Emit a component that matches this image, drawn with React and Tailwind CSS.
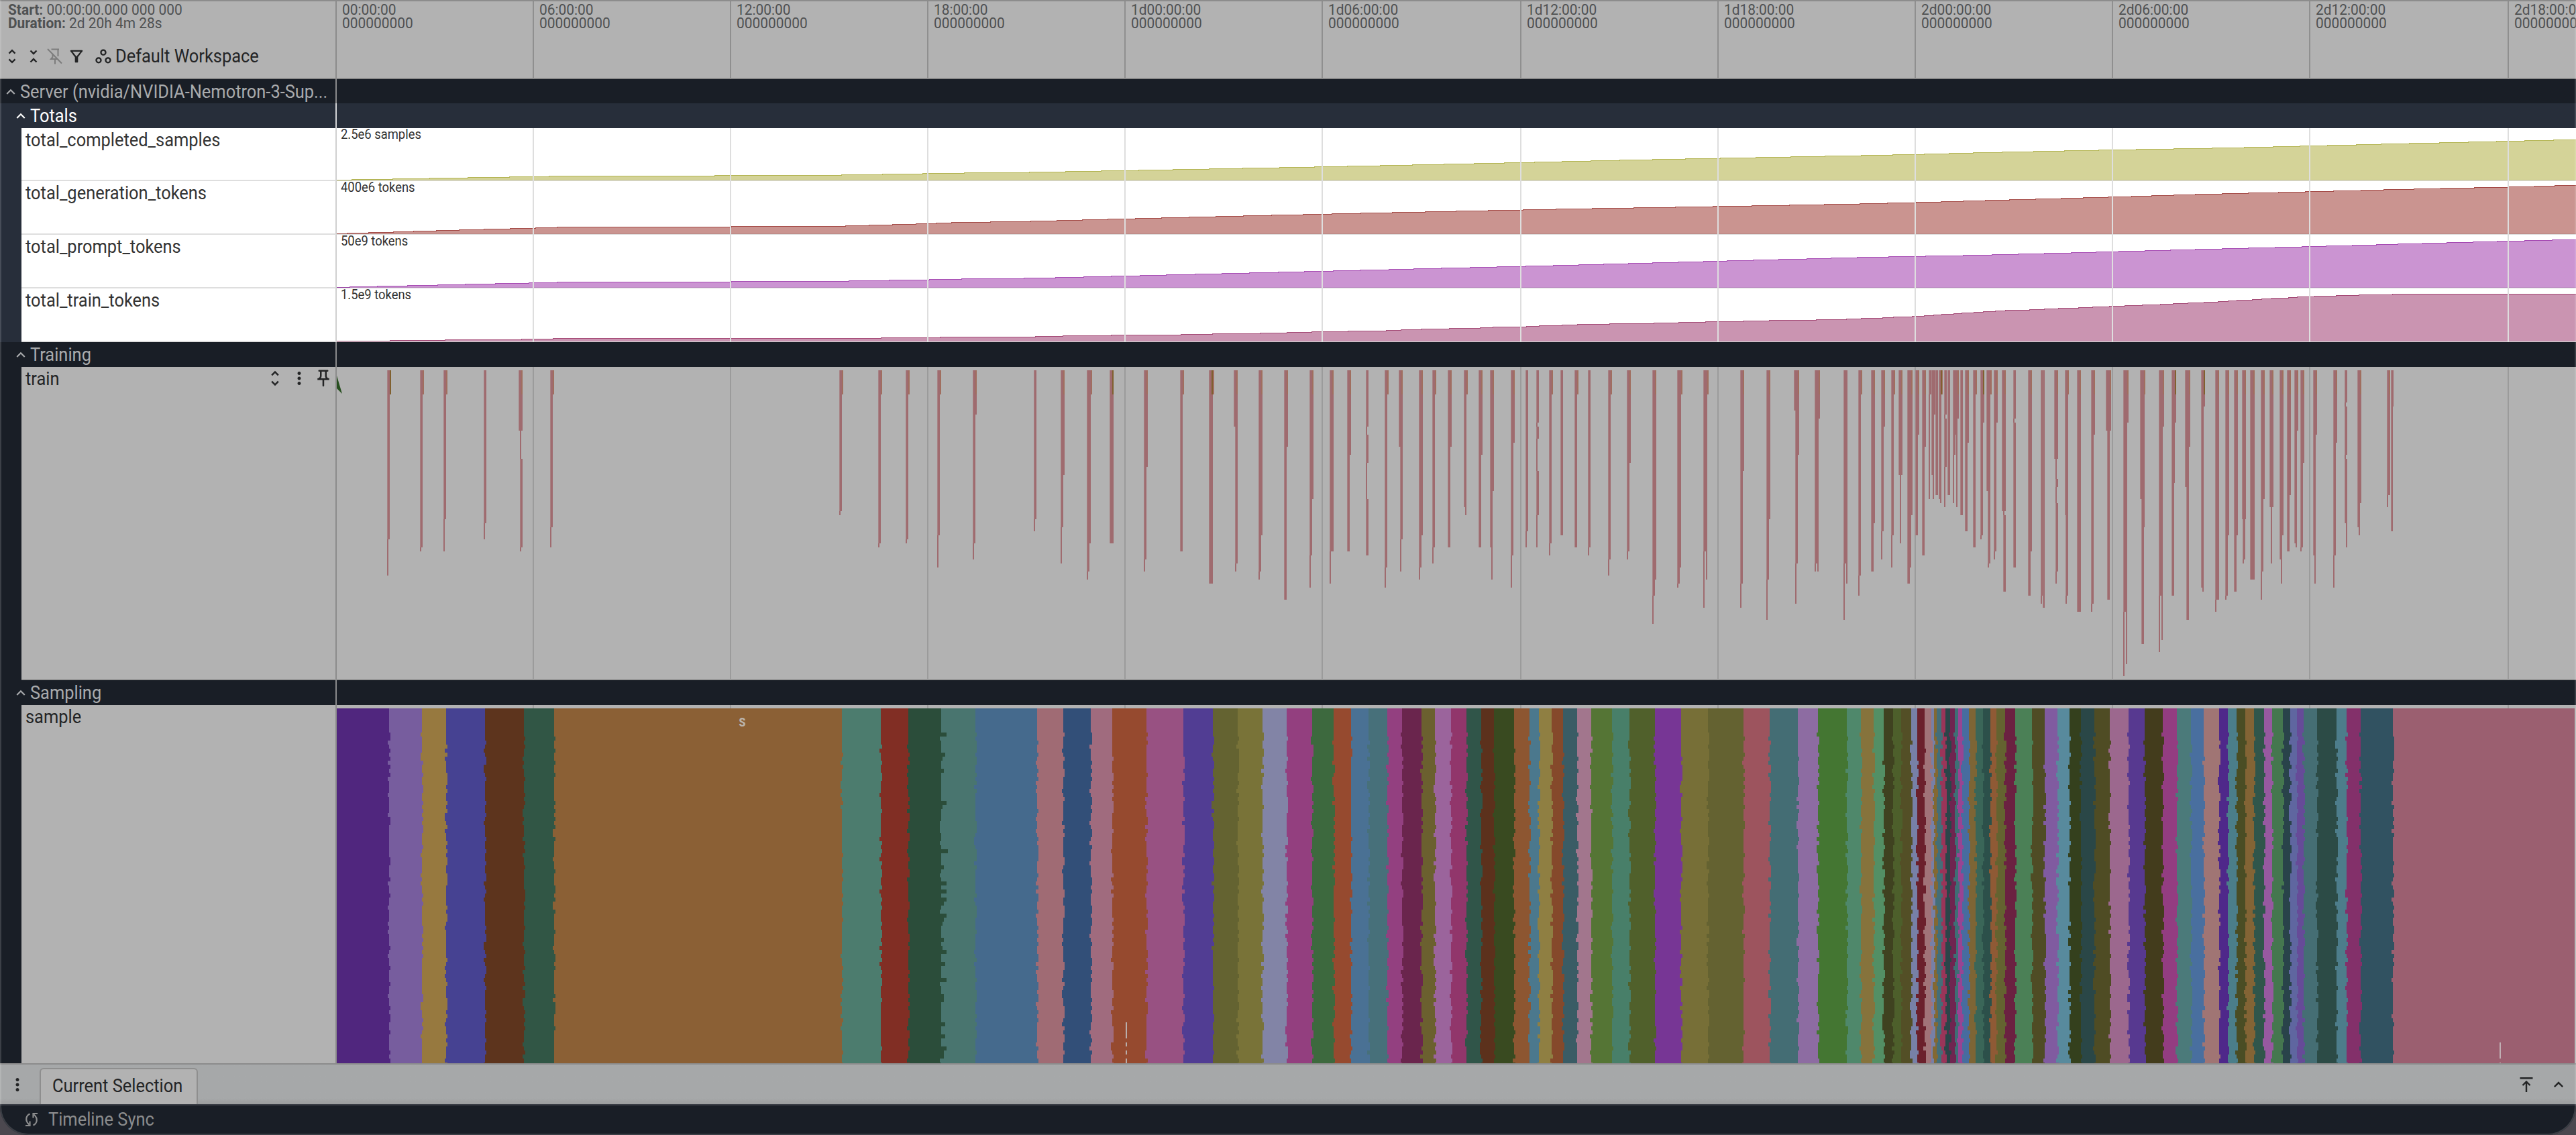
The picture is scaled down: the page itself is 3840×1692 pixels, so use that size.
import React from "react";
import {
  MdExpandLess,
  MdMoreVert,
  MdOutlineFilterAlt,
  MdOutlinePushPin,
  MdOutlineWorkspaces,
  MdUnfoldLess,
  MdUnfoldMore,
} from "react-icons/md";

// timeline starts right of the track shell, all x values are page pixels
const LEFT = 502;
const WIDTH = 3338;

const GRID = [794, 1088, 1382, 1676, 1970, 2266, 2560, 2854, 3148, 3442, 3738];

const TIMES = [
  "00:00:00",
  "06:00:00",
  "12:00:00",
  "18:00:00",
  "1d00:00:00",
  "1d06:00:00",
  "1d12:00:00",
  "1d18:00:00",
  "2d00:00:00",
  "2d06:00:00",
  "2d12:00:00",
  "2d18:00:00",
];

// every entry in steps is the x where the counter grows by one pixel
const COUNTERS = [
  {
    name: "total_completed_samples",
    max: "2.5e6 samples",
    fill: "#d4d398",
    line: "#b3b451",
    steps: [
      524, 585, 640, 697, 759, 818, 1065, 1254, 1315, 1375, 1437, 1534, 1588, 1641, 1697, 1748, 1802, 1852,
      1907, 1959, 2008, 2057, 2105, 2152, 2197, 2242, 2287, 2328, 2371, 2414, 2463, 2512, 2564, 2617, 2669,
      2720, 2774, 2821, 2868, 2905, 2941, 2984, 3031, 3077, 3128, 3184, 3240, 3297, 3345, 3388, 3428, 3469,
      3512, 3549, 3591, 3636, 3679, 3721, 3763, 3806,
    ],
  },
  {
    name: "total_generation_tokens",
    max: "400e6 tokens",
    fill: "#ca9490",
    line: "#a44a46",
    steps: [
      517, 549, 586, 616, 650, 684, 721, 760, 798, 830, 1090, 1260, 1295, 1330, 1365, 1395, 1418, 1476, 1536,
      1575, 1613, 1651, 1692, 1731, 1772, 1812, 1853, 1895, 1942, 1985, 2028, 2075, 2124, 2170, 2218, 2270,
      2319, 2373, 2435, 2497, 2553, 2611, 2667, 2719, 2772, 2813, 2856, 2893, 2926, 2959, 2995, 3034, 3072,
      3105, 3142, 3177, 3207, 3240, 3272, 3312, 3351, 3396, 3436, 3478, 3519, 3553, 3598, 3638, 3688, 3739,
      3778, 3808,
    ],
  },
  {
    name: "total_prompt_tokens",
    max: "50e9 tokens",
    fill: "#cb94d2",
    line: "#a64bb3",
    steps: [
      521, 562, 607, 652, 693, 738, 788, 830, 1090, 1265, 1325, 1385, 1433, 1526, 1573, 1615, 1656, 1699, 1738,
      1781, 1821, 1862, 1905, 1944, 1987, 2027, 2070, 2107, 2148, 2191, 2231, 2274, 2315, 2353, 2390, 2427,
      2463, 2501, 2539, 2574, 2613, 2651, 2693, 2729, 2768, 2815, 2870, 2926, 2969, 3008, 3047, 3087, 3124,
      3158, 3197, 3235, 3272, 3312, 3351, 3391, 3431, 3467, 3506, 3542, 3574, 3611, 3647, 3686, 3722, 3763,
      3804,
    ],
  },
  {
    name: "total_train_tokens",
    max: "1.5e9 tokens",
    fill: "#ca94b1",
    line: "#a44a76",
    steps: [
      581, 663, 777, 824, 1313, 1401, 1543, 1584, 1656, 1760, 1807, 1878, 1918, 1955, 2009, 2066, 2088, 2118,
      2160, 2206, 2225, 2275, 2294, 2328, 2351, 2399, 2465, 2502, 2542, 2598, 2637, 2707, 2752, 2774, 2806,
      2822, 2850, 2868, 2882, 2894, 2912, 2924, 2942, 2956, 2974, 2989, 3025, 3047, 3068, 3098, 3119, 3144,
      3167, 3193, 3220, 3239, 3261, 3285, 3306, 3321, 3334, 3357, 3371, 3386, 3411, 3424, 3450, 3482, 3516,
      3566,
    ],
  },
];

// one line per flame, segments are [x, width, bottom] and continue downwards
const FLAMES = [
  [[577, 6, 588], [577, 4, 804], [577, 2, 858]],
  [[626, 6, 588], [626, 4, 816], [626, 2, 822]],
  [[661, 6, 588], [661, 4, 774], [661, 2, 822]],
  [[721, 4, 780], [721, 2, 804]],
  [[773, 6, 642], [775, 2, 684], [775, 4, 816], [775, 2, 822]],
  [[820, 6, 588], [820, 4, 786], [820, 2, 816]],
  [[1251, 6, 588], [1251, 4, 762], [1251, 2, 768]],
  [[1309, 6, 588], [1309, 4, 810], [1309, 2, 816]],
  [[1350, 6, 588], [1350, 4, 804], [1350, 2, 810]],
  [[1397, 6, 588], [1397, 4, 798], [1397, 2, 846]],
  [[1450, 6, 618], [1450, 4, 810], [1450, 2, 834]],
  [[1541, 4, 774], [1541, 2, 792]],
  [[1581, 6, 708], [1581, 4, 786], [1581, 2, 840]],
  [[1620, 8, 588], [1620, 6, 810], [1620, 4, 852], [1620, 2, 864]],
  [[1654, 6, 810]],
  [[1705, 6, 696], [1705, 4, 834], [1705, 2, 852]],
  [[1759, 6, 588], [1759, 4, 822]],
  [[1802, 8, 588], [1802, 6, 870]],
  [[1839, 6, 636], [1841, 4, 840], [1841, 2, 852]],
  [[1876, 6, 798], [1876, 4, 852], [1876, 2, 864]],
  [[1914, 6, 666], [1914, 4, 894]],
  [[1952, 6, 744], [1952, 4, 828], [1952, 2, 876]],
  [[1982, 6, 822], [1982, 2, 870]],
  [[2008, 6, 678], [2008, 4, 822]],
  [[2036, 4, 636], [2036, 2, 648], [2036, 4, 690], [2036, 2, 744], [2036, 4, 828]],
  [[2064, 6, 588], [2064, 4, 846], [2064, 2, 876]],
  [[2085, 6, 666], [2087, 4, 804], [2087, 2, 852]],
  [[2115, 6, 798], [2115, 4, 846], [2115, 2, 864]],
  [[2135, 6, 588], [2135, 4, 816], [2135, 2, 840]],
  [[2158, 6, 666], [2158, 4, 816]],
  [[2182, 6, 588], [2182, 4, 756], [2184, 2, 768]],
  [[2204, 6, 678], [2204, 4, 816]],
  [[2221, 6, 732], [2221, 4, 816], [2223, 2, 864]],
  [[2252, 6, 660], [2252, 4, 828], [2252, 2, 876]],
  [[2274, 4, 792], [2274, 2, 816]],
  [[2290, 4, 630], [2290, 2, 636], [2290, 4, 654], [2290, 2, 702], [2290, 4, 768], [2290, 2, 816]],
  [[2309, 6, 588], [2309, 4, 810], [2309, 2, 828]],
  [[2326, 4, 798]],
  [[2347, 6, 588], [2347, 4, 816]],
  [[2367, 4, 816], [2367, 2, 828]],
  [[2397, 6, 588], [2397, 4, 834], [2397, 2, 858]],
  [[2425, 6, 690], [2425, 4, 822], [2425, 2, 834]],
  [[2463, 6, 864], [2463, 4, 888], [2463, 2, 930]],
  [[2500, 8, 588], [2500, 6, 846], [2500, 4, 870], [2500, 2, 876]],
  [[2539, 8, 588], [2539, 6, 822], [2539, 2, 906]],
  [[2543, 2, 864]],
  [[2594, 6, 702], [2594, 4, 870], [2594, 2, 906]],
  [[2633, 6, 774], [2633, 4, 864], [2633, 2, 924]],
  [[2674, 8, 612], [2676, 6, 678], [2676, 4, 840], [2676, 2, 900]],
  [[2705, 8, 624], [2705, 6, 840], [2705, 2, 852]],
  [[2709, 2, 852]],
  [[2748, 6, 840], [2748, 2, 924]],
  [[2752, 2, 870]],
  [[2770, 6, 588], [2770, 4, 858], [2770, 2, 888]],
  [[2789, 6, 780], [2789, 4, 852]],
  [[2804, 6, 636], [2804, 4, 792], [2804, 2, 834]],
  [[2819, 6, 588], [2819, 4, 798], [2819, 2, 846]],
  [[2830, 6, 708], [2832, 2, 810]],
  [[2843, 8, 768], [2843, 6, 846], [2843, 4, 870]],
  [[2855, 6, 648], [2855, 4, 798]],
  [[2865, 6, 666], [2865, 4, 828]],
  [[2875, 14, 588], [2875, 2, 744]],
  [[2879, 10, 618], [2879, 4, 708], [2881, 2, 744]],
  [[2885, 4, 738]],
  [[2890, 6, 588], [2890, 4, 744], [2892, 2, 750]],
  [[2898, 4, 618], [2898, 2, 624], [2898, 4, 696], [2898, 2, 756]],
  [[2903, 4, 738]],
  [[2911, 9, 624], [2911, 7, 648], [2911, 4, 678], [2911, 2, 750]],
  [[2916, 2, 756]],
  [[2922, 4, 768]],
  [[2929, 6, 660], [2929, 4, 792]],
  [[2941, 6, 588], [2941, 4, 816]],
  [[2952, 6, 630], [2952, 4, 798], [2952, 2, 804]],
  [[2961, 8, 588], [2961, 6, 732], [2963, 4, 840], [2963, 2, 846]],
  [[2972, 6, 630], [2972, 4, 822], [2972, 2, 834]],
  [[2984, 6, 762], [2986, 2, 768], [2986, 4, 882]],
  [[3001, 4, 624], [3001, 2, 630], [3001, 4, 846]],
  [[3023, 6, 822], [3023, 4, 888]],
  [[3042, 6, 888], [3042, 2, 900]],
  [[3045, 3, 906]],
  [[3062, 6, 684], [3064, 2, 714], [3064, 4, 726], [3064, 2, 750], [3064, 4, 852], [3064, 2, 870]],
  [[3078, 6, 588], [3078, 5, 768], [3079, 4, 888], [3079, 2, 900]],
  [[3096, 6, 912]],
  [[3117, 6, 648], [3117, 4, 900], [3117, 2, 912]],
  [[3139, 8, 642], [3141, 4, 894]],
  [[3165, 8, 630], [3165, 6, 912], [3165, 2, 1008]],
  [[3169, 2, 990]],
  [[3190, 8, 588], [3190, 7, 744], [3192, 5, 786], [3192, 4, 960]],
  [[3218, 8, 636], [3218, 6, 888], [3218, 2, 972]],
  [[3222, 2, 954]],
  [[3237, 7, 630], [3237, 5, 720], [3237, 4, 888]],
  [[3257, 8, 666], [3257, 6, 726], [3259, 4, 924]],
  [[3281, 6, 606], [3281, 4, 876], [3283, 2, 882]],
  [[3302, 6, 894], [3302, 2, 912]],
  [[3317, 6, 798], [3317, 4, 888], [3317, 2, 894]],
  [[3330, 6, 798], [3330, 4, 882]],
  [[3342, 6, 774], [3343, 4, 834], [3343, 2, 840]],
  [[3354, 7, 864]],
  [[3370, 6, 744], [3370, 4, 852], [3370, 2, 894]],
  [[3383, 6, 756], [3385, 2, 840]],
  [[3398, 6, 798], [3398, 4, 834], [3400, 2, 870]],
  [[3409, 6, 738], [3409, 4, 822]],
  [[3420, 6, 642], [3420, 4, 810], [3422, 2, 816]],
  [[3429, 6, 690], [3429, 4, 816], [3429, 2, 822]],
  [[3448, 6, 648], [3448, 4, 828], [3450, 2, 870]],
  [[3478, 6, 660], [3478, 4, 828], [3478, 2, 876]],
  [[3495, 4, 600], [3495, 2, 606], [3495, 4, 678], [3495, 2, 684], [3495, 4, 780], [3497, 2, 816]],
  [[3514, 6, 750], [3514, 4, 786], [3516, 2, 798]],
  [[3558, 5, 738], [3558, 2, 756]],
  [[3564, 4, 606], [3564, 3, 792]],
];

// flames with an olive slice in their first row
const OLIVE = [581, 1658, 1806, 2893, 2956, 3242, 3285];

// sampling slices: start x and colour
const SLICES = [
  [502, "#50267e"], [580, "#775d9e"], [629, "#97793f"], [665, "#464292"], [723, "#5d341d"], [781, "#315645"],
  [826, "#8b6035"], [1255, "#4c7c6e"], [1313, "#812e24"], [1354, "#2b4d3a"], [1403, "#49756f"], [1454, "#456a8d"],
  [1546, "#a06b74"], [1585, "#324f78"], [1626, "#a06b7e"], [1658, "#964a2f"], [1709, "#985182"], [1764, "#513d93"],
  [1808, "#646331"], [1845, "#797338"], [1882, "#8284a6"], [1918, "#933f7f"], [1956, "#3d693e"], [1988, "#964a2f"],
  [2014, "#4a7194"], [2040, "#47707a"], [2068, "#934080"], [2090, "#6a254d"], [2119, "#6b602f"], [2139, "#9b649c"],
  [2163, "#91366b"], [2186, "#305549"], [2208, "#5c311c"], [2227, "#394a20"], [2257, "#8d5631"], [2280, "#4b788d"],
  [2294, "#8f7f42"], [2313, "#85492b"], [2330, "#3a5c65"], [2351, "#a2768d"], [2372, "#557535"], [2403, "#487f69"],
  [2429, "#50602b"], [2467, "#773695"], [2506, "#776f37"], [2546, "#646231"], [2599, "#9d545e"], [2638, "#446d74"],
  [2680, "#8d6ca2"], [2710, "#447632"], [2753, "#4f886b"], [2774, "#86733c"], [2793, "#538f65"], [2808, "#3f4220"],
  [2822, "#4d5f2b"], [2834, "#534f26"], [2849, "#7780a7"], [2858, "#6b202c"], [2869, "#a17378"], [2879, "#7780a7"],
  [2883, "#836833"], [2887, "#446e78"], [2894, "#9a3559"], [2900, "#2b4549"], [2907, "#6f2550"], [2914, "#3f6e75"],
  [2919, "#984493"], [2925, "#476c9f"], [2935, "#7d6535"], [2945, "#3a6658"], [2956, "#2c504a"], [2967, "#8f5a35"],
  [2976, "#646330"], [2989, "#6b2141"], [3004, "#4b8056"], [3029, "#4f4c25"], [3048, "#805ba0"], [3067, "#588a9d"],
  [3085, "#34401d"], [3102, "#2a4747"], [3122, "#4f4c24"], [3145, "#9c688e"], [3173, "#573990"], [3197, "#433c1c"],
  [3224, "#933d81"], [3245, "#4b7a7a"], [3266, "#496f9f"], [3285, "#a07574"], [3308, "#4f288a"], [3321, "#4b7e8a"],
  [3334, "#4a4d24"], [3347, "#836435"], [3360, "#30564b"], [3375, "#9759a0"], [3387, "#45774f"], [3403, "#29434a"],
  [3414, "#5f66a0"], [3424, "#664b98"], [3434, "#456e74"], [3454, "#2c4b46"], [3483, "#4d7d8b"], [3498, "#83306a"],
  [3519, "#315261"], [3567, "#9b5f70"],
];

function noise(a, b) {
  const v = Math.sin(a * 12.9898 + b * 78.233) * 43758.5453;
  return v - Math.floor(v);
}

function slicePath(x, index) {
  let d = `M3838 1056H${x}V1092`;
  if (index === 0) return d + "V1585H3838Z";
  for (let row = 0, y = 1092; y < 1585; row++, y += 6) {
    const n = noise(index, row);
    let shift = n < 0.12 ? -2 : n > 0.7 ? 2 : 0;
    // this edge is much rougher than the others
    if (x === 1403 && n > 0.7) shift = 2 + Math.round((n - 0.7) * 12) * 2;
    d += `H${x + shift}V${Math.min(y + 6, 1585)}`;
  }
  return d + "H3838Z";
}

function counterPath(steps, height) {
  let y = height - 1.5;
  let d = `M${LEFT} ${y}`;
  steps.forEach((x) => {
    d += `H${x}V${--y}`;
  });
  return d + "H3840";
}

function GridLines({ color, top, height }) {
  return GRID.map((x) => <rect key={x} x={x} y={top} width="2" height={height} fill={color} />);
}

function Canvas({ top, height, children }) {
  return (
    <svg
      className="block shrink-0"
      width={WIDTH}
      height={height}
      viewBox={`${LEFT} ${top} ${WIDTH} ${height}`}
      shapeRendering="crispEdges"
    >
      {children}
    </svg>
  );
}

// slightly narrowed ui text
function Label({ children }) {
  return <span className="inline-block origin-left scale-x-[0.908] whitespace-nowrap">{children}</span>;
}

function TitleRow({ title, height, nested, active }) {
  return (
    <div className={`flex ${height} ${active ? "bg-[#272e3a] text-white" : "bg-[#191e26] text-[#a9abad]"}`}>
      <div
        className={`flex w-[502px] shrink-0 items-center border-r-2 pt-[1px] ${nested ? "pl-[18px]" : "pl-[3px]"} ${
          active ? "border-[#d4d5d7]" : "border-[#8a8b8c]"
        }`}
      >
        <MdExpandLess className="mr-[1px] size-[26px] shrink-0" />
        <div className="w-0">
          <Label>{title}</Label>
        </div>
      </div>
    </div>
  );
}

function CounterTrack({ counter, height }) {
  const d = counterPath(counter.steps, height);
  return (
    <div className="flex bg-[#272e3a]">
      <div
        className="ml-8 w-[470px] shrink-0 border-r-2 border-b-2 border-r-[#d0d0d0] border-b-[#dedede] bg-white pt-[2px] pl-[6px] leading-8 text-[#333]"
        style={{ height }}
      >
        <Label>{counter.name}</Label>
      </div>
      <div className="relative bg-white">
        <Canvas top={0} height={height}>
          <path d={`${d}V${height - 1}H${LEFT}Z`} fill={counter.fill} />
          <path d={d} fill="none" stroke={counter.line} />
          <rect x={LEFT} y={height - 2} width={WIDTH} height="1" fill="#000" opacity="0.08" />
          <rect x={LEFT} y={height - 1} width={WIDTH} height="1" fill="#dedede" />
          <GridLines color="#dedede" top={0} height={height} />
        </Canvas>
        <span className="absolute top-0 left-[6px] origin-left scale-x-[0.92] text-[20px] leading-[18px] whitespace-nowrap text-[#333]">
          {counter.max}
        </span>
      </div>
    </div>
  );
}

function TrainTrack() {
  return (
    <div className="flex h-[467px] bg-[#191e26]">
      <div className="ml-8 flex w-[470px] shrink-0 items-start justify-between border-r-2 border-b-2 border-r-[#8c8c8c] border-b-[#989898] bg-[#b2b2b2] pt-[1px] pl-[6px] leading-[34px] text-[#232425]">
        <Label>train</Label>
        <div className="flex items-center gap-[6px] pr-[3px] text-[#232425]">
          <MdUnfoldMore className="size-[30px]" />
          <MdMoreVert className="size-[30px]" />
          <MdOutlinePushPin className="h-[32px] w-[30px]" />
        </div>
      </div>
      <div className="bg-[#b2b2b2]">
        <Canvas top={547} height={467}>
          <GridLines color="#9b9b9b" top={547} height={466} />
          <rect x={LEFT} y="1012" width={WIDTH} height="2" fill="#989898" />
          <path d="M502 560L510 587L502 579Z" fill="#274f1f" shapeRendering="auto" />
          {FLAMES.map((flame, i) => {
            let y = 552;
            return flame.map(([x, w, bottom], j) => {
              const top = y;
              y = bottom;
              return (
                <g key={`${i}-${j}`}>
                  <rect x={x} y={top} width={w} height={bottom - top} fill="#9f6b6f" />
                  {w > 2 && <rect x={x} y={top} width="1" height={bottom - top} fill="#a78385" />}
                  {j === 0 && w > 4 && <rect x={x + w - 2} y="552" width="2" height="36" fill="#a06e5f" />}
                </g>
              );
            });
          })}
          {OLIVE.map((x) => (
            <rect key={x} x={x} y="552" width="2" height="36" fill="#80602f" />
          ))}
        </Canvas>
      </div>
    </div>
  );
}

function SampleTrack() {
  return (
    <div className="flex h-[534px] bg-[#191e26]">
      <div className="ml-8 w-[470px] shrink-0 border-r-2 border-[#8c8c8c] bg-[#b2b2b2] pt-[1px] pl-[6px] leading-[34px] text-[#232425]">
        <Label>sample</Label>
      </div>
      <div className="relative bg-[#b2b2b2]">
        <Canvas top={1051} height={534}>
          <GridLines color="#9b9b9b" top={1051} height={5} />
          {SLICES.map(([x, color], i) => (
            <path key={x} d={slicePath(x, i)} fill={color} />
          ))}
          <path d="M1679 1524V1548M1679 1554V1560M1679 1566V1572M1679 1578V1585" stroke="#b9aeab" strokeWidth="2" />
          <path d="M3727 1554V1578M3727 1584V1585" stroke="#c0b0b4" strokeWidth="2" />
        </Canvas>
        <span className="absolute top-[12px] left-[599px] font-['Roboto_Condensed','Roboto',sans-serif] text-[24px] leading-[24px] font-medium text-[#bab3ab]">
          s
        </span>
      </div>
    </div>
  );
}

function PinOffIcon() {
  return (
    <svg width="24" height="26" viewBox="0 0 24 26" fill="none" stroke="#7c7c7c" strokeWidth="2">
      <path d="M6.500 2.500H18M16.500 3V13M8.500 10V14L6 17H15M12 17V24.500" />
      <path d="M1 2L22 23.500" />
    </svg>
  );
}

function SyncIcon() {
  return (
    <svg width="22" height="22" viewBox="0 0 22 22" fill="none" stroke="currentColor" strokeWidth="2.200">
      <path d="M8.500 2.500C3 5 0.500 12.500 7.500 18.500" />
      <path d="M2 20H8.500V13.500" />
      <path d="M13.500 19.500C19 17 21.500 9.500 14.500 3.500" />
      <path d="M20 2H13.500V8.500" />
    </svg>
  );
}

function AlignTopIcon() {
  return (
    <svg width="20" height="24" viewBox="0 0 20 24" fill="none" stroke="currentColor" strokeWidth="2.400">
      <path d="M0.500 2.200H19.500M10 23V8M4.500 13L10 7.500L15.500 13" />
    </svg>
  );
}

function Header() {
  return (
    <div className="flex h-[118px] border-t-2 border-b-2 border-[#8c8c8c] bg-[#b2b2b2]">
      <div className="w-[502px] shrink-0 border-r-2 border-[#8c8c8c]">
        <div className="ml-3 origin-left scale-x-[0.95] pt-[3px] text-[22px] leading-[20px] text-[#4f5152]">
          <div>
            <b>Start:</b> 00:00:00.000 000 000
          </div>
          <div>
            <b>Duration:</b> 2d 20h 4m 28s
          </div>
        </div>
        <div className="mt-[21px] flex h-9 items-center pl-[4px] text-[#232425]">
          <MdUnfoldMore className="size-[28px]" />
          <MdUnfoldLess className="ml-[4px] size-[28px]" />
          <div className="ml-[6px]">
            <PinOffIcon />
          </div>
          <MdOutlineFilterAlt className="ml-[6px] size-[28px]" />
          <MdOutlineWorkspaces className="mr-[4px] ml-[12px] size-[28px]" />
          <Label>Default Workspace</Label>
        </div>
      </div>
      <div className="flex min-w-0 flex-1 overflow-hidden">
        {TIMES.map((time, i) => (
          <div
            key={time}
            className={`shrink-0 pt-[3px] pl-2 text-[22px] leading-[20px] text-[#4f5152] ${
              i > 0 ? "border-l-2 border-[#8f8f8f]" : ""
            }`}
            style={{ width: (GRID[i] || 4030) - (i > 0 ? GRID[i - 1] : LEFT) }}
          >
            <div className="origin-left scale-x-[0.95]">{time}</div>
            <div className="origin-left scale-x-[0.95]">000000000</div>
          </div>
        ))}
      </div>
    </div>
  );
}

export default function App() {
  return (
    <div className="h-[1692px] w-[3840px] overflow-hidden bg-[#4b484f] font-['Roboto',sans-serif] text-[28px]">
      <div className="relative h-[1692px] overflow-hidden rounded-b-[42px] bg-[#191e26]">
        <Header />
        <TitleRow title="Server (nvidia/NVIDIA-Nemotron-3-Sup..." height="h-[36px]" />
        <TitleRow title="Totals" height="h-[37px]" nested active />
        {COUNTERS.map((counter, i) => (
          <CounterTrack key={counter.name} counter={counter} height={i === 0 ? 79 : 80} />
        ))}
        <TitleRow title="Training" height="h-[37px]" nested />
        <TrainTrack />
        <TitleRow title="Sampling" height="h-[37px]" nested />
        <SampleTrack />

        <div className="flex h-[61px] items-end border-t-2 border-[#8c8c8c] bg-linear-to-b from-[#a6a8a9] from-85% to-[#9c9e9f] text-[#232425]">
          <div className="flex h-full w-[59px] items-center pl-[11px]">
            <MdMoreVert className="size-[30px]" />
          </div>
          <div className="flex h-[54px] w-[236px] items-center rounded-t-md border-2 border-b-0 border-[#8e8e8e] bg-[#b2b2b2] pb-[2px] pl-[17px]">
            <Label>Current Selection</Label>
          </div>
          <div className="ml-auto flex h-full items-center gap-[24px] pr-[12px]">
            <AlignTopIcon />
            <MdExpandLess className="size-[28px]" />
          </div>
        </div>
        <div className="flex h-[44px] items-center gap-[14px] border-t-2 border-[#3a3e46] pl-[36px] text-[#8b8c8d]">
          <SyncIcon />
          <Label>Timeline Sync</Label>
        </div>

        <div className="pointer-events-none absolute inset-0 rounded-b-[42px] border-x-2 border-b-2 border-white/15" />
      </div>
    </div>
  );
}
